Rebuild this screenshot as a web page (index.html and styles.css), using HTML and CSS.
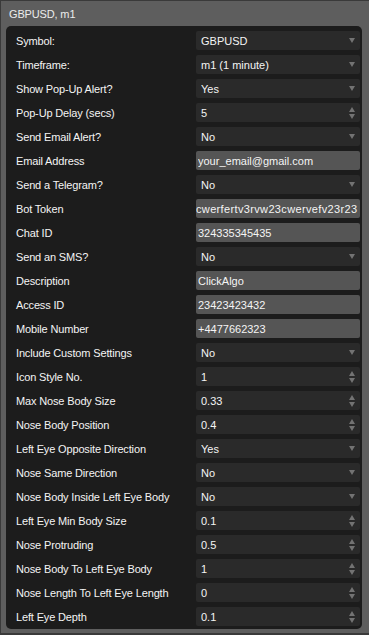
FILE: index.html
```html
<!DOCTYPE html>
<html>
<head>
<meta charset="utf-8">
<link rel="stylesheet" href="styles.css">
</head>
<body>
<div class="window">
  <div class="title">GBPUSD, m1</div>
  <div class="panel">
    <span class="label">Symbol:</span>
    <div class="ctl select"><span class="val">GBPUSD</span><i class="caret"></i></div>
    <span class="label">Timeframe:</span>
    <div class="ctl select"><span class="val">m1 (1 minute)</span><i class="caret"></i></div>
    <span class="label">Show Pop-Up Alert?</span>
    <div class="ctl select"><span class="val">Yes</span><i class="caret"></i></div>
    <span class="label">Pop-Up Delay (secs)</span>
    <div class="ctl spin"><span class="val">5</span><i class="arrows"><b class="up"></b><b class="down"></b></i></div>
    <span class="label">Send Email Alert?</span>
    <div class="ctl select"><span class="val">No</span><i class="caret"></i></div>
    <span class="label">Email Address</span>
    <div class="ctl text"><span class="val">your_email@gmail.com</span></div>
    <span class="label">Send a Telegram?</span>
    <div class="ctl select"><span class="val">No</span><i class="caret"></i></div>
    <span class="label">Bot Token</span>
    <div class="ctl text token"><span class="val">cwerfertv3rvw23cwervefv23r23</span></div>
    <span class="label">Chat ID</span>
    <div class="ctl text"><span class="val">324335345435</span></div>
    <span class="label">Send an SMS?</span>
    <div class="ctl select"><span class="val">No</span><i class="caret"></i></div>
    <span class="label">Description</span>
    <div class="ctl text"><span class="val">ClickAlgo</span></div>
    <span class="label">Access ID</span>
    <div class="ctl text"><span class="val">23423423432</span></div>
    <span class="label">Mobile Number</span>
    <div class="ctl text"><span class="val">+4477662323</span></div>
    <span class="label">Include Custom Settings</span>
    <div class="ctl select"><span class="val">No</span><i class="caret"></i></div>
    <span class="label">Icon Style No.</span>
    <div class="ctl spin"><span class="val">1</span><i class="arrows"><b class="up"></b><b class="down"></b></i></div>
    <span class="label">Max Nose Body Size</span>
    <div class="ctl spin"><span class="val">0.33</span><i class="arrows"><b class="up"></b><b class="down"></b></i></div>
    <span class="label">Nose Body Position</span>
    <div class="ctl spin"><span class="val">0.4</span><i class="arrows"><b class="up"></b><b class="down"></b></i></div>
    <span class="label">Left Eye Opposite Direction</span>
    <div class="ctl select"><span class="val">Yes</span><i class="caret"></i></div>
    <span class="label">Nose Same Direction</span>
    <div class="ctl select"><span class="val">No</span><i class="caret"></i></div>
    <span class="label">Nose Body Inside Left Eye Body</span>
    <div class="ctl select"><span class="val">No</span><i class="caret"></i></div>
    <span class="label">Left Eye Min Body Size</span>
    <div class="ctl spin"><span class="val">0.1</span><i class="arrows"><b class="up"></b><b class="down"></b></i></div>
    <span class="label">Nose Protruding</span>
    <div class="ctl spin"><span class="val">0.5</span><i class="arrows"><b class="up"></b><b class="down"></b></i></div>
    <span class="label">Nose Body To Left Eye Body</span>
    <div class="ctl spin"><span class="val">1</span><i class="arrows"><b class="up"></b><b class="down"></b></i></div>
    <span class="label">Nose Length To Left Eye Length</span>
    <div class="ctl spin"><span class="val">0</span><i class="arrows"><b class="up"></b><b class="down"></b></i></div>
    <span class="label">Left Eye Depth</span>
    <div class="ctl spin"><span class="val">0.1</span><i class="arrows"><b class="up"></b><b class="down"></b></i></div>
  </div>
</div>
</body>
</html>
```

FILE: styles.css
```css
html, body {
  margin: 0;
  padding: 0;
  background: #5e5e5e;
}
body {
  font-family: "Liberation Sans", Arial, sans-serif;
  font-size: 11px;
  color: #f4f4f4;
}
.window {
  width: 369px;
  height: 635px;
  box-sizing: border-box;
  border-top: 1px solid #3a3a3a;
  border-left: 1px solid #3a3a3a;
  border-bottom: 2px solid #3a3a3a;
  background: #5e5e5e;
  display: flex;
  flex-direction: column;
}
.title {
  height: 25px;
  box-sizing: border-box;
  padding: 2px 0 0 8px;
  line-height: 23px;
  color: #ececec;
  letter-spacing: -0.15px;
}
.panel {
  margin-left: 5px;
  width: 356px;
  box-sizing: border-box;
  background: #1c1c1c;
  border-radius: 5px;
  padding: 5px 2px 3px 10px;
  display: grid;
  grid-template-columns: 180px 164px;
  grid-auto-rows: 19px;
  row-gap: 5px;
  align-items: center;
}
.label {
  letter-spacing: -0.15px;
  white-space: nowrap;
  line-height: 19px;
  padding-top: 1px;
}
.ctl {
  height: 19px;
  border-radius: 2px;
  background: #2a2a2a;
  display: flex;
  align-items: center;
  position: relative;
  overflow: hidden;
  padding: 0 5px 0 5px;
  box-sizing: border-box;
}
.ctl .val {
  flex: 1;
  white-space: nowrap;
  overflow: hidden;
  line-height: 19px;
  padding-top: 1px;
}
.ctl.text {
  background: #555555;
  padding: 0 2px;
}
.ctl.token {
  padding: 0;
}
.token .val {
  letter-spacing: 0.35px;
}
.caret {
  width: 0;
  height: 0;
  border-left: 3px solid transparent;
  border-right: 3px solid transparent;
  border-top: 5px solid #737373;
  flex: none;
}
.arrows {
  display: flex;
  flex-direction: column;
  gap: 2px;
  flex: none;
}
.arrows b {
  display: block;
  width: 0;
  height: 0;
  border-left: 3px solid transparent;
  border-right: 3px solid transparent;
}
.arrows .up {
  border-bottom: 5px solid #737373;
}
.arrows .down {
  border-top: 5px solid #737373;
}
```
